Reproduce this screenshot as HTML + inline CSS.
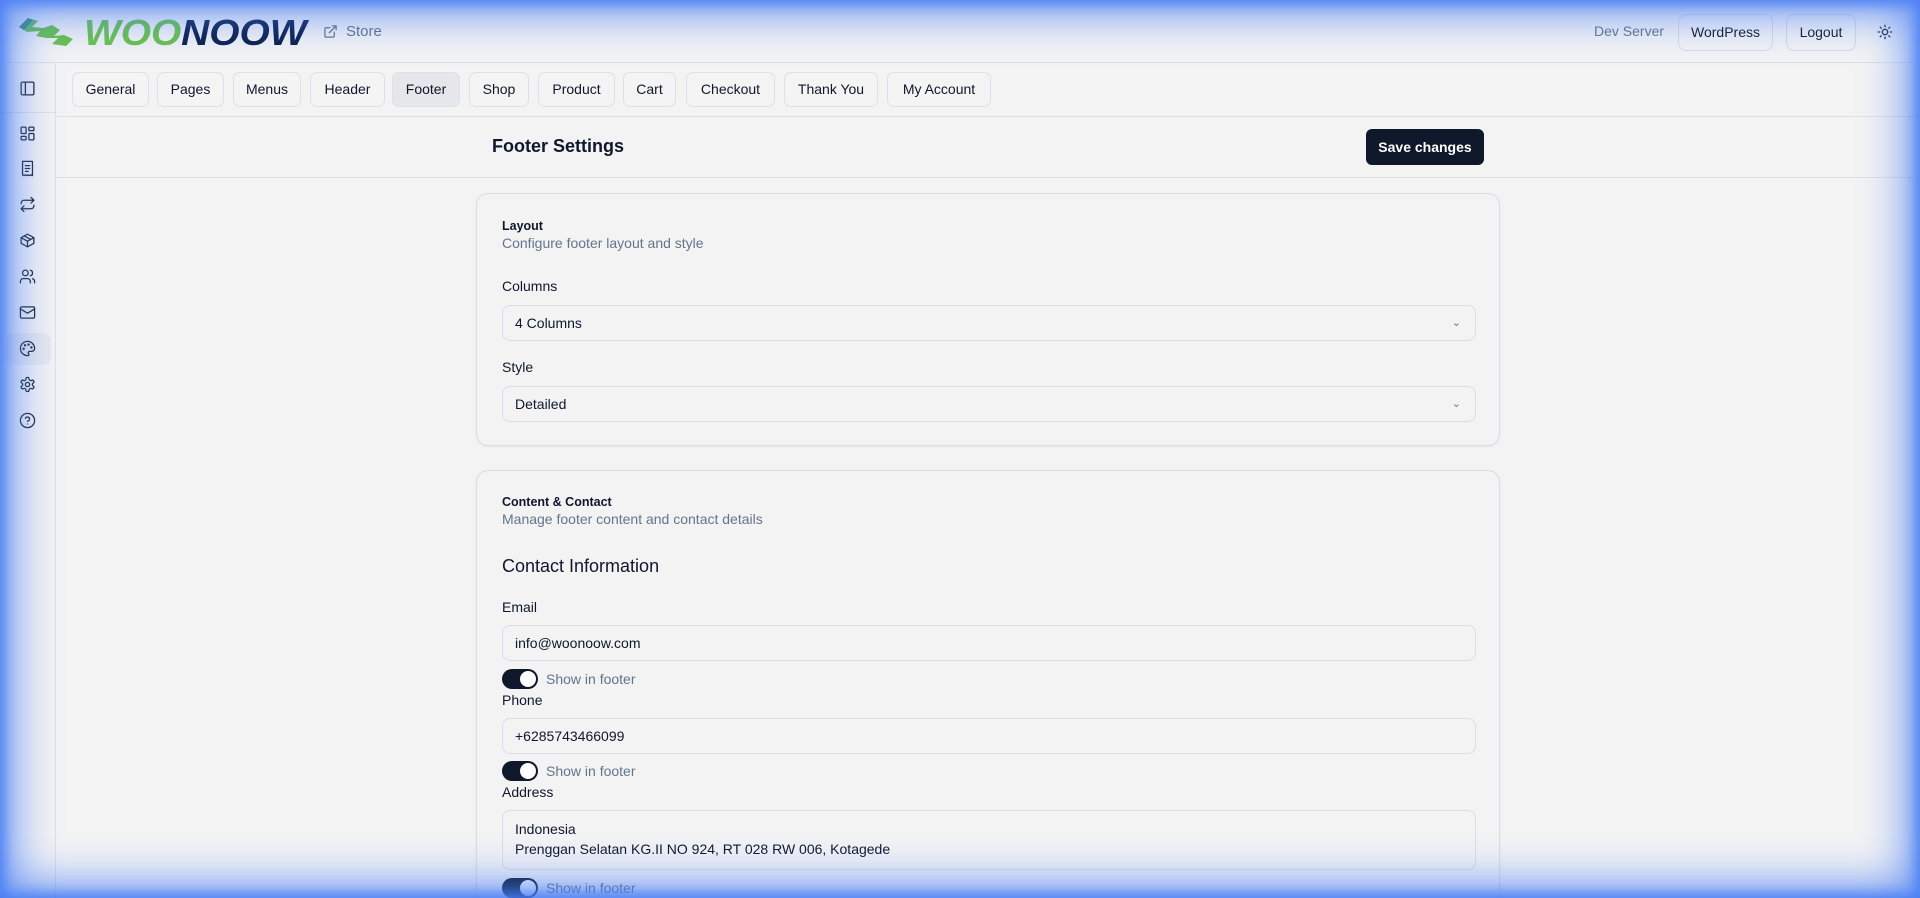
<!DOCTYPE html>
<html><head><meta charset="utf-8"><style>
*{box-sizing:border-box;margin:0;padding:0}
html{width:1920px;height:898px;overflow:hidden}
body{width:1920px;height:898px;overflow:hidden;background:#f3f3f4;font-family:"Liberation Sans",sans-serif;color:#0f172a;position:relative;font-size:14px}
.hdr{position:absolute;left:0;top:0;width:1920px;height:63px;border-bottom:1px solid #dde0e8}
.side{position:absolute;left:0;top:63px;width:56px;height:835px;border-right:1px solid #dde0e8}
.side svg{position:absolute;left:19px;width:17px;height:17px;fill:none;stroke:#1e293b;stroke-width:1.8;stroke-linecap:round;stroke-linejoin:round}
.tabs{position:absolute;left:56px;top:63px;right:0;height:54px;border-bottom:1px solid #dde0e8}
.tab{position:absolute;top:9px;height:35px;border:1px solid #dde0e8;border-radius:7px;background:#f4f4f5;font-size:14px;line-height:33px;text-align:center;color:#0f172a}
.sub{position:absolute;left:56px;top:117px;right:0;height:61px;border-bottom:1px solid #dde0e8}
.card{position:absolute;left:476px;width:1024px;border:1px solid #dadde6;border-radius:12px;background:#f3f3f4;box-shadow:0 1px 2px rgba(0,0,0,.05)}
.lbl{position:absolute;left:25px;font-size:14px;font-weight:600;color:#0f172a}
.inp{position:absolute;left:25px;width:974px;height:36px;border:1px solid #dadde6;border-radius:8px;padding-left:12px;line-height:34px;font-size:14px;color:#0f172a}
.tg{position:absolute;left:25px;width:36px;height:20px;border-radius:10px;background:#0f172a}
.tg:after{content:"";position:absolute;right:2px;top:2px;width:16px;height:16px;border-radius:50%;background:#fff}
.tgl{position:absolute;left:69px;font-size:14px;color:#64748b}
.btn{position:absolute;top:14px;height:37px;border:1px solid #d3dbea;border-radius:8px;font-size:14px;line-height:35px;text-align:center;color:#0f172a}
.glow{position:absolute;left:0;top:0;width:1920px;height:898px;pointer-events:none;box-shadow:inset 0 0 45px 12px rgba(70,125,245,.85),inset 0 0 12px 4px rgba(70,125,245,.9)}
</style></head><body>
<div class="hdr">
 <svg style="position:absolute;left:15px;top:15px" width="62" height="32" viewBox="0 0 60 32"><path d="M3 12 L12 3 L22 6 L16 12 L27 13 L36 10 L44 15 L38 21 L48 20 L57 24 L50 31 L36 29 L42 23 L30 23 L20 21 L24 16 L11 17 Z" fill="#6cc24a"/><path d="M3 12 L12 3 L17 5 L8 15Z" fill="#3d8f6a"/></svg>
 <div style="position:absolute;left:84px;top:12px;font-size:36px;font-weight:bold;font-style:italic;letter-spacing:0px;transform:scaleX(1.08);transform-origin:left"><span style="color:#6cc24a">WOO</span><span style="color:#0b1f4b">NOOW</span></div>
 <svg style="position:absolute;left:323px;top:24px" width="15" height="15" viewBox="0 0 24 24" fill="none" stroke="#64748b" stroke-width="2" stroke-linecap="round"><path d="M15 3h6v6M10 14L21 3M18 13v6a2 2 0 0 1-2 2H5a2 2 0 0 1-2-2V8a2 2 0 0 1 2-2h6"/></svg>
 <div style="position:absolute;left:346px;top:23px;color:#64748b;font-size:15px">Store</div>
 <div style="position:absolute;left:1594px;top:23px;color:#64748b;font-size:14px">Dev Server</div>
 <div class="btn" style="left:1678px;width:95px">WordPress</div>
 <div class="btn" style="left:1786px;width:70px">Logout</div>
 <svg style="position:absolute;left:1877px;top:24px" width="16" height="16" viewBox="0 0 24 24" fill="none" stroke="#1e293b" stroke-width="2" stroke-linecap="round"><circle cx="12" cy="12" r="4"/><path d="M12 2v2M12 20v2M4.9 4.9l1.4 1.4M17.7 17.7l1.4 1.4M2 12h2M20 12h2M4.9 19.1l1.4-1.4M17.7 6.3l1.4-1.4"/></svg>
</div>
<div class="side">
 <div style="position:absolute;left:0;top:49px;width:55px;border-top:1px solid #dde0e8"></div>
 <div style="position:absolute;left:5px;top:270px;width:46px;height:32px;border-radius:8px;background:#e7e9ee"></div>
 <svg style="top:17px" viewBox="0 0 24 24"><rect x="3" y="3" width="18" height="18" rx="2"/><path d="M9 3v18"/></svg>
 <svg style="top:62px" viewBox="0 0 24 24"><rect x="3" y="3" width="7" height="9" rx="1"/><rect x="14" y="3" width="7" height="5" rx="1"/><rect x="14" y="12" width="7" height="9" rx="1"/><rect x="3" y="16" width="7" height="5" rx="1"/></svg>
 <svg style="top:97px" viewBox="0 0 24 24"><path d="M5 2h14v20l-2-1-2 1-2-1-2 1-2-1-2 1-2-1z"/><path d="M9 8h6M9 12h6M9 16h4"/></svg>
 <svg style="top:133px" viewBox="0 0 24 24"><path d="M17 2l4 4-4 4M3 11v-1a4 4 0 0 1 4-4h14M7 22l-4-4 4-4M21 13v1a4 4 0 0 1-4 4H3"/></svg>
 <svg style="top:169px" viewBox="0 0 24 24"><path d="M21 8l-9-5-9 5v8l9 5 9-5z"/><path d="M3 8l9 5 9-5M12 13v8M7.5 5.5l9 5"/></svg>
 <svg style="top:205px" viewBox="0 0 24 24"><circle cx="9" cy="7" r="4"/><path d="M2 21v-2a4 4 0 0 1 4-4h6a4 4 0 0 1 4 4v2M16 3.1a4 4 0 0 1 0 7.8M22 21v-2a4 4 0 0 0-3-3.9"/></svg>
 <svg style="top:241px" viewBox="0 0 24 24"><rect x="2" y="4" width="20" height="16" rx="2"/><path d="M22 7l-10 6L2 7"/></svg>
 <svg style="top:277px" viewBox="0 0 24 24"><path d="M12 22a10 10 0 1 1 10-10c0 2.5-2 4-4.5 4H15a2 2 0 0 0-1.5 3.3A1.6 1.6 0 0 1 12 22z"/><circle cx="13.5" cy="6.5" r=".8"/><circle cx="17.5" cy="10.5" r=".8"/><circle cx="8.5" cy="7.5" r=".8"/><circle cx="6.5" cy="12.5" r=".8"/></svg>
 <svg style="top:313px" viewBox="0 0 24 24"><circle cx="12" cy="12" r="3"/><path d="M12.2 2h-.4a2 2 0 0 0-2 2v.2a2 2 0 0 1-1 1.7l-.4.3a2 2 0 0 1-2 0l-.2-.1a2 2 0 0 0-2.7.7l-.2.4a2 2 0 0 0 .7 2.7l.2.1a2 2 0 0 1 1 1.7v.5a2 2 0 0 1-1 1.7l-.2.1a2 2 0 0 0-.7 2.7l.2.4a2 2 0 0 0 2.7.7l.2-.1a2 2 0 0 1 2 0l.4.3a2 2 0 0 1 1 1.7v.2a2 2 0 0 0 2 2h.4a2 2 0 0 0 2-2v-.2a2 2 0 0 1 1-1.7l.4-.3a2 2 0 0 1 2 0l.2.1a2 2 0 0 0 2.7-.7l.2-.4a2 2 0 0 0-.7-2.7l-.2-.1a2 2 0 0 1-1-1.7v-.5a2 2 0 0 1 1-1.7l.2-.1a2 2 0 0 0 .7-2.7l-.2-.4a2 2 0 0 0-2.7-.7l-.2.1a2 2 0 0 1-2 0l-.4-.3a2 2 0 0 1-1-1.7V4a2 2 0 0 0-2-2z"/></svg>
 <svg style="top:349px" viewBox="0 0 24 24"><circle cx="12" cy="12" r="10"/><path d="M9.1 9a3 3 0 0 1 5.8 1c0 2-3 3-3 3M12 17h.01"/></svg>
</div>
<div class="tabs">
 <div class="tab" style="left:16px;width:77px">General</div>
 <div class="tab" style="left:101px;width:67px">Pages</div>
 <div class="tab" style="left:177px;width:68px">Menus</div>
 <div class="tab" style="left:254px;width:75px">Header</div>
 <div class="tab" style="left:336px;width:68px;background:#e5e7eb">Footer</div>
 <div class="tab" style="left:413px;width:60px">Shop</div>
 <div class="tab" style="left:482px;width:77px">Product</div>
 <div class="tab" style="left:567px;width:53px">Cart</div>
 <div class="tab" style="left:630px;width:89px">Checkout</div>
 <div class="tab" style="left:728px;width:94px">Thank You</div>
 <div class="tab" style="left:831px;width:104px">My Account</div>
</div>
<div class="sub">
 <div style="position:absolute;left:436px;top:19px;font-size:18px;font-weight:bold">Footer Settings</div>
 <div style="position:absolute;left:1310px;top:12px;width:118px;height:36px;border-radius:6px;background:#0f172a;color:#fff;font-size:14px;font-weight:bold;line-height:36px;text-align:center">Save changes</div>
</div>
<div class="card" style="top:193px;height:253px">
 <div class="lbl" style="top:25px;font-size:12.5px">Layout</div>
 <div style="position:absolute;left:25px;top:41px;color:#64748b;font-size:14px">Configure footer layout and style</div>
 <div class="lbl" style="top:84px;font-weight:500">Columns</div>
 <div class="inp" style="top:111px">4 Columns<span style="position:absolute;right:14px;top:0;color:#64748b;font-size:11px">&#8964;</span></div>
 <div class="lbl" style="top:165px;font-weight:500">Style</div>
 <div class="inp" style="top:192px">Detailed<span style="position:absolute;right:14px;top:0;color:#64748b;font-size:11px">&#8964;</span></div>
</div>
<div class="card" style="top:470px;height:428px;border-bottom:none;border-bottom-left-radius:0;border-bottom-right-radius:0">
 <div class="lbl" style="top:24px;font-size:12.5px">Content &amp; Contact</div>
 <div style="position:absolute;left:25px;top:40px;color:#64748b;font-size:14px">Manage footer content and contact details</div>
 <div style="position:absolute;left:25px;top:85px;font-size:18px;font-weight:500">Contact Information</div>
 <div class="lbl" style="top:128px;font-weight:500">Email</div>
 <div class="inp" style="top:154px">info@woonoow.com</div>
 <div class="tg" style="top:198px"></div><div class="tgl" style="top:200px">Show in footer</div>
 <div class="lbl" style="top:221px;font-weight:500">Phone</div>
 <div class="inp" style="top:247px">+6285743466099</div>
 <div class="tg" style="top:290px"></div><div class="tgl" style="top:292px">Show in footer</div>
 <div class="lbl" style="top:313px;font-weight:500">Address</div>
 <div class="inp" style="top:339px;height:60px;line-height:20px;padding-top:8px">Indonesia<br>Prenggan Selatan KG.II NO 924, RT 028 RW 006, Kotagede</div>
 <div class="tg" style="top:407px"></div><div class="tgl" style="top:409px">Show in footer</div>
</div>
<div class="glow"></div>
</body></html>
